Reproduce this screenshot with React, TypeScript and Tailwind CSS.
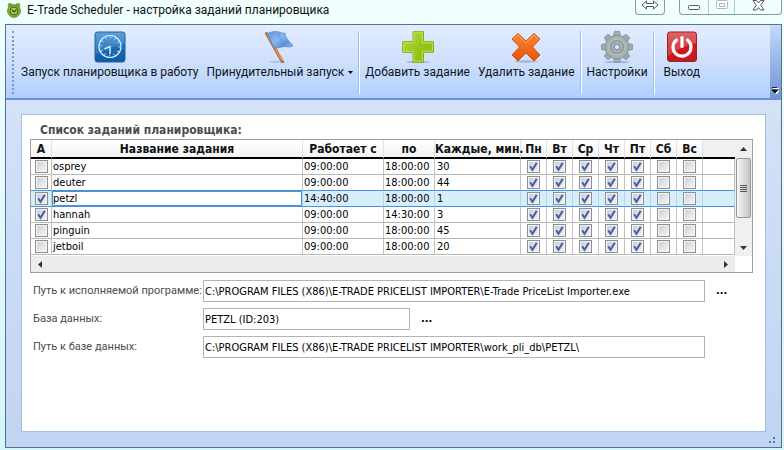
import React, { useState } from "react";

const DAYS = ["Пн", "Вт", "Ср", "Чт", "Пт", "Сб", "Вс"];

type Task = { name: string; active: boolean; from: string; to: string; every: string };

const TASKS: Task[] = [
  { name: "osprey", active: false, from: "09:00:00", to: "18:00:00", every: "30" },
  { name: "deuter", active: false, from: "09:00:00", to: "18:00:00", every: "44" },
  { name: "petzl", active: true, from: "14:40:00", to: "18:00:00", every: "1" },
  { name: "hannah", active: true, from: "09:00:00", to: "14:30:00", every: "3" },
  { name: "pinguin", active: false, from: "09:00:00", to: "18:00:00", every: "45" },
  { name: "jetboil", active: false, from: "09:00:00", to: "18:00:00", every: "20" },
];

function AppIcon() {
  return (
    <svg width="14" height="16" viewBox="0 0 14 16" aria-hidden="true">
      <circle cx="3" cy="3.500" r="2.400" fill="#7ea832" />
      <circle cx="11" cy="3.500" r="2.400" fill="#7ea832" />
      <circle cx="7" cy="9" r="6.300" fill="#8ab437" stroke="#5c8520" />
      <circle cx="7" cy="9" r="4" fill="#a6cc52" stroke="#3f6214" />
      <path d="M5 8l2 2 2.500-2.500" fill="none" stroke="#2f4a10" strokeWidth="1.200" />
    </svg>
  );
}

function ClockIcon() {
  return (
    <svg width="32" height="32" viewBox="0 0 32 32" aria-hidden="true">
      <defs>
        <linearGradient id="clockBg" x1="0" y1="0" x2="0" y2="1">
          <stop offset="0" stopColor="#4c94d2" />
          <stop offset="0.500" stopColor="#1b6fb9" />
          <stop offset="1" stopColor="#0d59a4" />
        </linearGradient>
      </defs>
      <rect x="1" y="1" width="30" height="30" rx="2.500" fill="url(#clockBg)" stroke="#1c62a5" />
      <path d="M1.500 3.500q0-2 2-2h25q2 0 2 2V13Q18 15 1.500 23z" fill="#fff" opacity="0.130" />
      <circle cx="16" cy="15.500" r="11" fill="none" stroke="#d8efff" strokeWidth="1.200" />
      <circle cx="16" cy="15.500" r="9" fill="none" stroke="#b9def8" strokeWidth="1.800" strokeDasharray="0.900 3.812" />
      <path d="M16 23v-7.500l-5.500 2.500" fill="none" stroke="#d8f1ff" strokeWidth="1.400" />
    </svg>
  );
}

function FlagIcon() {
  return (
    <svg width="32" height="32" viewBox="0 0 32 32" aria-hidden="true">
      <defs>
        <linearGradient id="flagBlue" x1="0" y1="0" x2="1" y2="1">
          <stop offset="0" stopColor="#5b93da" />
          <stop offset="0.450" stopColor="#8bb8ef" />
          <stop offset="0.700" stopColor="#5f97dc" />
          <stop offset="1" stopColor="#88b6ee" />
        </linearGradient>
      </defs>
      <ellipse cx="13" cy="30.800" rx="8" ry="1" fill="#8ea6c8" opacity="0.500" />
      <path d="M2.500 2.500L18.500 31" stroke="#a86a34" strokeWidth="3" strokeLinecap="round" />
      <path d="M3 2.500L18.500 30.500" stroke="#d99552" strokeWidth="1.600" />
      <path d="M3.500 2.500C8 .5 12 0 15 1c3 1 4 1.500 6 1 0 5 4 8 8 12.500-3 2.500-5 1-8 1-3 0-6 2-10.500 1.500z" fill="url(#flagBlue)" stroke="#5c8fd0" strokeWidth="0.800" />
      <path d="M14.500 2c0 5 4 8 6 13" stroke="#3f78c2" strokeWidth="1.800" opacity="0.300" fill="none" />
    </svg>
  );
}

function PlusIcon() {
  return (
    <svg width="32" height="32" viewBox="0 0 32 32" aria-hidden="true">
      <defs>
        <linearGradient id="plusGreen" x1="0" y1="0" x2="1" y2="1">
          <stop offset="0" stopColor="#b9db45" />
          <stop offset="0.500" stopColor="#98c81a" />
          <stop offset="1" stopColor="#82b80b" />
        </linearGradient>
      </defs>
      <ellipse cx="16" cy="31" rx="12" ry="1" fill="#7389a8" opacity="0.500" />
      <path d="M11 .7h10.500v10h10v10.600h-10v10H11v-10H.7V10.700H11z" fill="url(#plusGreen)" stroke="#7fb012" />
      <path d="M12 1.800h8.400v10h10v8.400h-10v10H12v-10H1.800v-8.400H12z" fill="none" stroke="#cbe86b" strokeWidth="0.800" />
    </svg>
  );
}

function CrossIcon() {
  return (
    <svg width="32" height="32" viewBox="0 0 32 32" aria-hidden="true">
      <defs>
        <linearGradient id="crossOrange" x1="0" y1="0" x2="0" y2="1">
          <stop offset="0" stopColor="#f88735" />
          <stop offset="1" stopColor="#e85206" />
        </linearGradient>
      </defs>
      <ellipse cx="16" cy="30.500" rx="12" ry="1.200" fill="#7389a8" opacity="0.500" />
      <path d="M8 2.500L16 10l8-7.500 6 5.500-7.500 8 7.500 8-6 6L16 22l-8 8-6-6L9.500 16 2 8z" fill="url(#crossOrange)" stroke="#d2520f" strokeLinejoin="round" />
      <path d="M3.500 8L8 4l8 7.500L24 4l4.500 4" fill="none" stroke="#ffb070" strokeWidth="0.800" />
    </svg>
  );
}

function GearIcon() {
  return (
    <svg width="34" height="32" viewBox="-17 -16 34 32" aria-hidden="true">
      <ellipse cx="0" cy="15" rx="13" ry="1.200" fill="#7389a8" opacity="0.500" />
      <g fill="#a0acad" stroke="#828e90" strokeWidth="0.800">
        {[0, 45, 90, 135].map((angle) => (
          <path key={angle} d="M-3.500-11l1-4.500h5l1 4.500v22l-1 4.500h-5l-1-4.500z" transform={`rotate(${angle})`} />
        ))}
        <circle r="11.800" />
      </g>
      <circle r="11.300" fill="#a5b0b0" />
      <circle r="8" fill="none" stroke="#c0c9c8" strokeWidth="1" />
      <circle r="6.500" fill="none" stroke="#8f9b9d" strokeWidth="1.600" />
      <circle r="2.800" fill="#d5e5fb" stroke="#7d898c" />
    </svg>
  );
}

function PowerIcon() {
  return (
    <svg width="32" height="32" viewBox="0 0 32 32" aria-hidden="true">
      <defs>
        <linearGradient id="powerRed" x1="0" y1="0" x2="0" y2="1">
          <stop offset="0" stopColor="#d2474b" />
          <stop offset="0.500" stopColor="#d3151b" />
          <stop offset="1" stopColor="#c3191e" />
        </linearGradient>
      </defs>
      <rect x="1.500" y="1" width="29" height="29.500" rx="2.500" fill="url(#powerRed)" stroke="#a91b21" />
      <path d="M2 3q0-1.500 2-1.500h24q2 0 2 2V12Q17 15 2 25z" fill="#fff" opacity="0.180" />
      <path d="M10.500 9a9 9 0 1 0 11 0" fill="none" stroke="#fff" strokeWidth="3.200" strokeLinecap="round" />
      <path d="M16 6.500v9" stroke="#fff" strokeWidth="3.200" strokeLinecap="round" />
    </svg>
  );
}

function Tick({ label, initial }: { label: string; initial: boolean }) {
  return (
    <label className="relative mx-auto block size-[13px]">
      <input
        type="checkbox"
        aria-label={label}
        defaultChecked={initial}
        className="peer block size-[13px] appearance-none border border-[#8e8f8f] bg-linear-to-br from-[#cbcfd5] to-[#f6f6f6] shadow-[inset_0_0_0_1px_#f4f4f4] checked:from-[#c3cde0] checked:to-[#f2f5fb]"
      />
      <svg className="pointer-events-none absolute inset-0 hidden peer-checked:block" width="13" height="13" viewBox="0 0 13 13" aria-hidden="true">
        <path d="M3.200 6.200l2.300 3.600L9.800 2.800" fill="none" stroke="#4b5f97" strokeWidth="2" />
      </svg>
    </label>
  );
}

function ToolButton({ icon, text, menu = false }: { icon: React.ReactNode; text: string; menu?: boolean }) {
  return (
    <button type="button" className="flex flex-col items-center whitespace-nowrap px-1 pt-1.5 text-xs leading-[18px] text-[#10141c]">
      {icon}
      <span className="flex items-center gap-1">
        {text}
        {menu && (
          <svg width="5" height="3" viewBox="0 0 5 3" aria-hidden="true">
            <path d="M0 0h5L2.500 3z" fill="#000" />
          </svg>
        )}
      </span>
    </button>
  );
}

function Divider() {
  return <span className="mx-px mt-1.5 h-[63px] w-0.5 shrink-0 border-l border-[#9ebfee] bg-white" />;
}

function Arrow({ d }: { d: string }) {
  return (
    <svg width="7" height="7" viewBox="0 0 7 7" aria-hidden="true">
      <path d={d} fill="#333" />
    </svg>
  );
}

function CaptionButtons() {
  return (
    <div className="flex items-start">
      <button type="button" aria-label="Сдвинуть" className="mr-3.5 flex h-[15px] w-[30px] items-center justify-center rounded-b border border-t-0 border-[#899a9c] pb-1">
        <svg width="18" height="10" viewBox="0 0 18 10" aria-hidden="true">
          <path d="M1 5l4.500-4v2.500h7V1L17 5l-4.500 4V6.500h-7V9z" fill="#fff" stroke="#4d5558" />
        </svg>
      </button>
      <div className="flex h-[15px] w-[103px] rounded-b border border-t-0 border-[#899a9c]">
        <button type="button" aria-label="Свернуть" className="flex w-[28px] items-center justify-center">
          <svg width="12" height="5" viewBox="0 0 12 5" aria-hidden="true">
            <rect x="0.500" y="0.500" width="11" height="4" rx="1" fill="#fff" stroke="#525a5d" />
          </svg>
        </button>
        <button type="button" aria-label="Развернуть" className="flex w-[27px] justify-center border-x border-[#b7c6c8]">
          <svg width="12" height="10" viewBox="0 0 12 10" aria-hidden="true">
            <rect x="0.500" y="0.500" width="11" height="8" rx="1" fill="#fff" stroke="#b1b9bb" />
            <rect x="3.500" y="3.500" width="5" height="3" fill="#fff" stroke="#b1b9bb" />
          </svg>
        </button>
        <button type="button" aria-label="Закрыть" className="flex flex-1 justify-center">
          <svg width="13" height="11" viewBox="0 0 13 11" aria-hidden="true">
            <path d="M1 .5h3.500l2 2.500 2-2.500H12L8.700 5.200 12 10H8.500l-2-2.500-2 2.500H1l3.300-4.800z" fill="#fff" stroke="#4d5558" />
          </svg>
        </button>
      </div>
    </div>
  );
}

function TaskTable() {
  const [selected, setSelected] = useState(2);
  const head = "h-[19px] overflow-visible whitespace-nowrap border-b-2 border-r border-b-black border-r-[#e0e3e8] p-0 text-center font-bold";
  return (
    <div className="flex border border-[#a0a0a0] bg-white">
      <div className="min-w-0 flex-1">
        <table className="w-full table-fixed border-separate border-spacing-0 text-left">
          <colgroup>
            <col className="w-[21px]" />
            <col />
            <col className="w-[81px]" />
            <col className="w-[51px]" />
            <col className="w-[86px]" />
            {DAYS.map((d) => (
              <col key={d} className="w-[26px]" />
            ))}
            <col className="w-[32px]" />
          </colgroup>
          <thead className="bg-linear-to-b from-white to-[#f1f2f4] text-xs leading-4 text-[#111]">
            <tr>
              <th className={head}>А</th>
              <th className={head}>Название задания</th>
              <th className={head}>Работает с</th>
              <th className={head}>по</th>
              <th className={head}>Каждые, мин.</th>
              {DAYS.map((d) => (
                <th key={d} className={head}>{d}</th>
              ))}
              <th className="border-b-2 border-black bg-[#f0f0f0] p-0" />
            </tr>
          </thead>
          <tbody className="text-[11px] leading-[15px] text-black">
            {TASKS.map((task, row) => {
              const on = row === selected;
              const cell = on
                ? "h-4 border-b border-r border-b-[#4a90dc] border-r-[#b9d3e4] bg-[#d6eefb] p-0"
                : row === selected - 1
                  ? "h-4 border-b border-r border-b-[#4a90dc] border-r-[#c0c0c0] p-0"
                  : "h-4 border-b border-r border-b-[#b8b8b8] border-r-[#c0c0c0] p-0";
              return (
                <tr key={task.name} onClick={() => setSelected(row)}>
                  <td className={cell}><Tick label={`Активно: ${task.name}`} initial={task.active} /></td>
                  <td className={cell}>
                    <div className={on ? "bg-white pl-px shadow-[inset_0_0_0_1px_#4a90dc]" : "pl-px"}>{task.name}</div>
                  </td>
                  <td className={cell}><div className="pl-px">{task.from}</div></td>
                  <td className={cell}><div className="pl-px">{task.to}</div></td>
                  <td className={cell}><div className="pl-0.5">{task.every}</div></td>
                  {DAYS.map((d, i) => (
                    <td key={d} className={cell}><Tick label={`${task.name}, ${d}`} initial={i < 5} /></td>
                  ))}
                  <td className={cell} />
                </tr>
              );
            })}
          </tbody>
        </table>
        <div className="mt-px flex h-4 items-center justify-between bg-[#ececec] px-1.5">
          <Arrow d="M5 0v7L1 3.500z" />
          <Arrow d="M2 0v7l4-3.500z" />
        </div>
      </div>
      <div className="mb-4 flex w-[17px] shrink-0 flex-col items-center bg-[#f0f0f0]">
        <span className="flex h-[18px] items-center"><Arrow d="M0 5h7L3.500 1z" /></span>
        <span className="flex h-[60px] w-[15px] flex-col items-center justify-center gap-px rounded-xs border border-[#979797] bg-linear-to-r from-[#f5f5f5] to-[#c4c4c8]">
          <i className="h-px w-[7px] bg-[#555]" />
          <i className="h-px w-[7px] bg-[#555]" />
          <i className="h-px w-[7px] bg-[#555]" />
          <i className="h-px w-[7px] bg-[#555]" />
        </span>
        <span className="mt-auto flex h-[17px] items-center"><Arrow d="M0 2h7L3.500 6z" /></span>
      </div>
    </div>
  );
}

function Field({ id, label, value, width, browse = false }: { id: string; label: string; value: string; width: string; browse?: boolean }) {
  return (
    <div className="flex h-[22px] items-center">
      <label htmlFor={id} className="w-[170px] shrink-0 whitespace-nowrap font-['Roboto','Open_Sans',sans-serif] text-[#4c4c4c]">{label}</label>
      <input id={id} defaultValue={value} className={`h-[22px] border border-[#b4b4b4] bg-white px-px text-black ${width}`} />
      {browse && <button type="button" aria-label={`Обзор: ${label}`} className="ml-2.5 px-px font-bold text-black">...</button>}
    </div>
  );
}

export default function App() {
  return (
    <div className="flex min-h-screen flex-col bg-linear-to-b from-[#f0fffe] to-[#d5f5fb] pb-0.5 pl-[5px] pr-0.5 font-['Roboto','Open_Sans',sans-serif]">
      <header className="flex h-6 items-start justify-between pl-0.5">
        <h1 className="flex items-center gap-1.5 pt-0.5 text-xs leading-4 font-normal text-[#111]">
          <AppIcon />
          E-Trade Scheduler - настройка заданий планировщика
        </h1>
        <CaptionButtons />
      </header>
      <main className="flex flex-1 flex-col border border-[#56718f] bg-linear-to-b from-[#d9e5f8] via-[#ccdcf6] to-[#c1d4f1]">
        <nav className="flex h-[75px] border-b-2 border-[#6f90d2] bg-linear-to-b from-[#e2edff] via-[#cfe0fc] to-[#afcffe]">
          <span className="ml-1.5 mt-1.5 mr-[3px] h-[63px] w-0.5 border-l-2 border-dotted border-[#7898d4]" />
          <ToolButton icon={<ClockIcon />} text="Запуск планировщика в работу" />
          <ToolButton icon={<FlagIcon />} text="Принудительный запуск" menu />
          <Divider />
          <ToolButton icon={<PlusIcon />} text="Добавить задание" />
          <ToolButton icon={<CrossIcon />} text="Удалить задание" />
          <Divider />
          <ToolButton icon={<GearIcon />} text="Настройки" />
          <Divider />
          <div className="pl-1"><ToolButton icon={<PowerIcon />} text="Выход" /></div>
          <button type="button" aria-label="Параметры панели" className="ml-auto flex w-[11px] items-end justify-center bg-linear-to-b from-[#c5d9fb] to-[#6f93d4] pb-1">
            <svg width="7" height="7" viewBox="0 0 7 7" aria-hidden="true">
              <path d="M1 1.500h6M2 4h5L4.500 7z" fill="#fff" stroke="#fff" />
              <path d="M0 .5h5M0 3h6L3 6z" fill="#000" stroke="#000" strokeWidth="0.800" />
            </svg>
          </button>
        </nav>
        <section className="mx-[15px] mt-3.5 flex-1 border border-[#9dbfe8] bg-white px-2 pt-1.5 font-['DejaVu_Sans_Condensed','Noto_Sans',sans-serif]">
          <h2 className="pl-2.5 text-xs leading-[18px] font-bold text-[#4c4c4c]">Список заданий планировщика:</h2>
          <div className="mr-1"><TaskTable /></div>
          <form className="mt-[7px] flex flex-col gap-1.5 pl-[3px] text-[11px]">
            <Field id="program" label="Путь к исполняемой программе:" value="C:\PROGRAM FILES (X86)\E-TRADE PRICELIST IMPORTER\E-Trade PriceList Importer.exe" width="w-[502px]" browse />
            <Field id="database" label="База данных:" value="PETZL (ID:203)" width="w-[207px]" browse />
            <Field id="path" label="Путь к базе данных:" value="C:\PROGRAM FILES (X86)\E-TRADE PRICELIST IMPORTER\work_pli_db\PETZL\" width="w-[502px]" />
          </form>
        </section>
        <footer className="flex h-[15px] items-center justify-end pr-1.5">
          <svg width="6" height="6" viewBox="0 0 6 6" aria-hidden="true">
            <path d="M4 0h2v2H4zM0 4h2v2H0zM4 4h2v2H4z" fill="#5877a8" />
          </svg>
        </footer>
      </main>
    </div>
  );
}
